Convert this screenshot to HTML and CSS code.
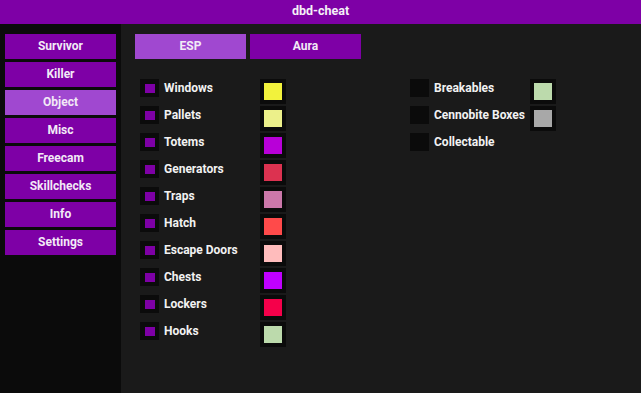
FILE: index.html
```html
<!DOCTYPE html>
<html>
<head>
<meta charset="utf-8">
<link rel="stylesheet" href="styles.css">
</head>
<body>
<div class="window">
  <div class="titlebar">dbd-cheat</div>
  <div class="body">
    <nav class="sidebar">
      <div class="nav-btn">Survivor</div>
      <div class="nav-btn">Killer</div>
      <div class="nav-btn active">Object</div>
      <div class="nav-btn">Misc</div>
      <div class="nav-btn">Freecam</div>
      <div class="nav-btn">Skillchecks</div>
      <div class="nav-btn">Info</div>
      <div class="nav-btn">Settings</div>
    </nav>
    <main class="content">
      <div class="tabs">
        <div class="tab active">ESP</div>
        <div class="tab">Aura</div>
      </div>
      <div class="columns">
        <div class="col">
          <div class="row"><div class="check"><span class="box on"></span><span class="label">Windows</span></div><div class="swatch"><span class="c-windows"></span></div></div>
          <div class="row"><div class="check"><span class="box on"></span><span class="label">Pallets</span></div><div class="swatch"><span class="c-pallets"></span></div></div>
          <div class="row"><div class="check"><span class="box on"></span><span class="label">Totems</span></div><div class="swatch"><span class="c-totems"></span></div></div>
          <div class="row"><div class="check"><span class="box on"></span><span class="label">Generators</span></div><div class="swatch"><span class="c-generators"></span></div></div>
          <div class="row"><div class="check"><span class="box on"></span><span class="label">Traps</span></div><div class="swatch"><span class="c-traps"></span></div></div>
          <div class="row"><div class="check"><span class="box on"></span><span class="label">Hatch</span></div><div class="swatch"><span class="c-hatch"></span></div></div>
          <div class="row"><div class="check"><span class="box on"></span><span class="label">Escape Doors</span></div><div class="swatch"><span class="c-doors"></span></div></div>
          <div class="row"><div class="check"><span class="box on"></span><span class="label">Chests</span></div><div class="swatch"><span class="c-chests"></span></div></div>
          <div class="row"><div class="check"><span class="box on"></span><span class="label">Lockers</span></div><div class="swatch"><span class="c-lockers"></span></div></div>
          <div class="row"><div class="check"><span class="box on"></span><span class="label">Hooks</span></div><div class="swatch"><span class="c-hooks"></span></div></div>
        </div>
        <div class="col col-last">
          <div class="row"><div class="check"><span class="box"></span><span class="label">Breakables</span></div><div class="swatch"><span class="c-breakables"></span></div></div>
          <div class="row"><div class="check"><span class="box"></span><span class="label">Cennobite Boxes</span></div><div class="swatch"><span class="c-boxes"></span></div></div>
          <div class="row"><div class="check"><span class="box"></span><span class="label">Collectable</span></div></div>
        </div>
      </div>
    </main>
  </div>
</div>
</body>
</html>
```

FILE: styles.css
```css
* { box-sizing: border-box; }
html, body { margin: 0; padding: 0; }
body {
  width: 641px;
  height: 393px;
  overflow: hidden;
  background: #1a1a1a;
  font-family: Roboto, "Liberation Sans", sans-serif;
  font-weight: bold;
  font-size: 12px;
  color: #f2f2f2;
}
.window { display: flex; flex-direction: column; height: 393px; }
.titlebar {
  height: 24px;
  line-height: 22px;
  background: #7e00a6;
  text-align: center;
  font-size: 12.5px;
  color: #f4f0f6;
}
.body { flex: 1; display: flex; min-width: 0; }
.sidebar {
  flex: none;
  width: 121px;
  background: #0b0b0b;
  padding: 10px 5px 0 5px;
  display: flex;
  flex-direction: column;
  gap: 3px;
}
.nav-btn {
  height: 25px;
  line-height: 24px;
  background: #7e00a6;
  text-align: center;
  color: #f2eaf6;
}
.nav-btn.active { background: #a048d0; }
.content { flex: 1; min-width: 0; padding: 10px 0 0 14px; }
.tabs { display: flex; gap: 4px; }
.tab {
  width: 111px;
  height: 25px;
  line-height: 24px;
  background: #7e00a6;
  text-align: center;
  color: #f2eaf6;
}
.tab.active { background: #a048d0; }
.columns { display: flex; margin: 20px 0 0 5px; }
.col { flex: none; width: 270px; display: flex; flex-direction: column; gap: 2px; }
.col-last { width: auto; }
.row { display: flex; height: 25px; }
.check { flex: none; width: 120px; display: flex; align-items: flex-start; }
.box {
  width: 19px;
  height: 18px;
  background: #0b0b0b;
  padding: 5px 4px 4px 5px;
  flex: none;
}
.box.on::after {
  content: "";
  display: block;
  width: 10px;
  height: 9px;
  background: #7e00a6;
}
.label { margin-left: 5px; line-height: 18px; white-space: nowrap; }
.swatch {
  flex: none;
  width: 26px;
  height: 25px;
  background: #0b0b0b;
  padding: 4px;
}
.swatch span { display: block; width: 18px; height: 17px; }
.c-windows { background: #f2f23c; }
.c-pallets { background: #ecf08a; }
.c-totems { background: #b800d8; }
.c-generators { background: #dc3250; }
.c-traps { background: #cc78aa; }
.c-hatch { background: #ff4a4a; }
.c-doors { background: #ffbcbc; }
.c-chests { background: #c000ff; }
.c-lockers { background: #f5004a; }
.c-hooks { background: #bcdaac; }
.c-breakables { background: #bcdaac; }
.c-boxes { background: #a8a8a8; }
```
